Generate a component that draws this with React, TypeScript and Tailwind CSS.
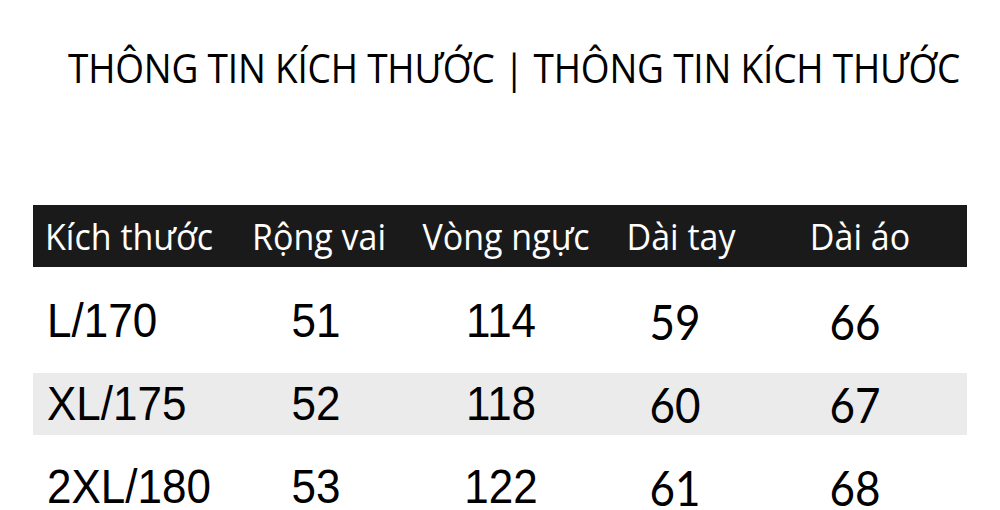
const HEAD = ["Kích thước", "Rộng vai", "Vòng ngực", "Dài tay", "Dài áo"];

const ROWS = [
  { size: "L/170", vals: ["51", "114", "59", "66"] },
  { size: "XL/175", vals: ["52", "118", "60", "67"] },
  { size: "2XL/180", vals: ["53", "122", "61", "68"] },
];

const COLS = "grid grid-cols-[192px_188px_186px_164px_194px] items-center";

export default function App() {
  return (
    <div className="w-[1000px] h-[510px] overflow-hidden bg-white">
      {/* Title */}
      <div className="h-[134px] flex items-center pl-[68px]">
        <h1 className="font-['Open_Sans','Noto_Sans',sans-serif] text-[37px] leading-none text-black tracking-[-0.2px] scale-y-110 whitespace-nowrap">
          THÔNG TIN KÍCH THƯỚC | THÔNG TIN KÍCH THƯỚC
        </h1>
      </div>

      <div className="px-[33px] mt-[71px]">
        {/* Header */}
        <div
          className={`${COLS} h-[62px] bg-[#1a1a1a] text-white text-[34px] font-['Open_Sans','Noto_Sans',sans-serif]`}
        >
          {HEAD.map((h) => (
            <div key={h} className="text-center whitespace-nowrap scale-y-105">
              {h}
            </div>
          ))}
        </div>

        {/* Rows */}
        <div className="mt-[23px] flex flex-col gap-[21px]">
          {ROWS.map((r, i) => (
            <div
              key={r.size}
              className={`${COLS} h-[62px] text-black text-[44px] leading-none ${i === 1 ? "bg-[#ebebeb]" : ""}`}
            >
              <div className="pl-[14px] scale-y-110 origin-left font-['Liberation_Sans',Arial,sans-serif]">
                {r.size}
              </div>
              <div className="text-center pr-[6px] scale-y-110 font-['Liberation_Sans',Arial,sans-serif]">
                {r.vals[0]}
              </div>
              <div className="text-center pr-[10px] scale-y-110 font-['Liberation_Sans',Arial,sans-serif]">
                {r.vals[1]}
              </div>
              <div className="text-center pr-[12px] scale-y-110 font-['Lato','Open_Sans',sans-serif]">
                {r.vals[2]}
              </div>
              <div className="text-center pr-[10px] scale-y-110 font-['Lato','Open_Sans',sans-serif]">
                {r.vals[3]}
              </div>
            </div>
          ))}
        </div>
      </div>
    </div>
  );
}
